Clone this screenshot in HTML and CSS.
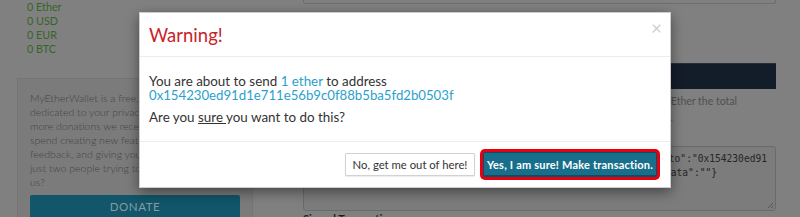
FILE: index.html
```html
<!DOCTYPE html>
<html>
<head>
<meta charset="utf-8">
<link rel="stylesheet" href="styles.css">
</head>
<body>
<div class="page">
  <div class="left">
    <div class="balances">
      <div>0 Ether</div>
      <div>0 USD</div>
      <div>0 EUR</div>
      <div>0 BTC</div>
    </div>
    <div class="donate-box">
      <p class="donate-text">MyEtherWallet is a free, open-source service<br>dedicated to your privacy and security. The<br>more donations we receive, the more time we<br>spend creating new features, listening to your<br>feedback, and giving you what you want. We are<br>just two people trying to change the world. Help<br>us?</p>
      <div class="donate-btn">DONATE</div>
    </div>
  </div>
  <div class="right">
    <div class="input-end"></div>
    <div class="navy-bar"></div>
    <div class="hint"><span>Including the gas fee you will have 1 Ether the total</span></div>
    <div class="hint hint-2"><span>amount sent to the address above.</span></div>
    <div class="raw-tx">
      <div class="tx-line"><span>{"nonce":"0x00","gasPrice":"0x04a817c800","gasLimit":"0x5208","to":"0x154230ed91</span></div>
      <div class="tx-line tx-line-2"><span>d1e711e56b9c0f88b5ba5fd2b0503f","value":"0x0de0b6b3a7640000","data":""}</span></div>
      <svg class="grip" width="7" height="7" viewBox="0 0 7 7"><path d="M6 1L1 6M6 4L4 6" stroke="#555" stroke-width="1"/></svg>
    </div>
    <div class="label">Signed Transaction</div>
  </div>
</div>

<div class="modal">
  <div class="modal-header">
    <h3 class="modal-title">Warning!</h3>
    <span class="close">&times;</span>
  </div>
  <div class="modal-body">
    <p class="msg">You are about to send <span class="hl">1 ether</span> to address<br><span class="hl addr">0x154230ed91d1e711e56b9c0f88b5ba5fd2b0503f</span></p>
    <p class="msg q">Are you <u>sure </u>you want to do this?</p>
  </div>
  <div class="modal-footer">
    <button class="btn btn-default">No, get me out of here!</button>
    <button class="btn btn-primary">Yes, I am sure! Make transaction.</button>
  </div>
</div>
</body>
</html>
```
FILE: styles.css
```css
html, body {
  margin: 0;
  padding: 0;
}
body {
  background: #808080;
  font-family: Lato, "Open Sans", sans-serif;
  font-size: 11px;
  width: 800px;
  height: 217px;
  overflow: hidden;
  position: relative;
}
.page {
  display: flex;
  gap: 50px;
  padding-left: 17px;
}
.left {
  width: 236px;
  flex: none;
}
.balances {
  padding-left: 10px;
  color: #376527;
  line-height: 14px;
  font-size: 10.8px;
}
.donate-box {
  margin-top: 22px;
  background: #7b7b7b;
  border: 1px solid #747474;
  padding: 12px 12px 20px 12px;
}
.donate-text {
  margin: 0;
  color: #444;
  font-size: 10.5px;
  line-height: 14px;
  font-weight: 300;
  white-space: nowrap;
  overflow: hidden;
}
.donate-btn {
  margin-top: 6px;
  background: #11566a;
  color: #8a9aa0;
  text-align: center;
  font-size: 11.5px;
  height: 34px;
  line-height: 23px;
  letter-spacing: 0.6px;
  border-radius: 2px;
}
.right {
  width: 473px;
  flex: none;
}
.input-end {
  height: 3px;
  border: 1px solid #6e6e6e;
  border-top: none;
  border-radius: 0 0 3px 3px;
}
.navy-bar {
  margin-top: 59px;
  height: 25px;
  background: #131d2a;
  border-top: 1px solid #26303b;
}
.hint {
  display: flex;
  justify-content: flex-end;
  overflow: hidden;
  white-space: nowrap;
  color: #505050;
  font-size: 10.5px;
  line-height: 16px;
  font-weight: 400;
  margin-right: 39px;
}
.navy-bar + .hint {
  margin-top: 4px;
}
.hint-2 {
  margin-right: 103px;
}
.hint span, .tx-line span {
  flex: none;
}
.raw-tx {
  position: relative;
  margin-top: 21px;
  height: 58px;
  background: #7c7c7c;
  border: 1px solid #6a6a6a;
  border-radius: 3px;
  padding: 5px 8px 0 8px;
  font-family: "DejaVu Sans Mono", monospace;
  font-size: 9.6px;
  color: #262626;
}
.tx-line {
  display: flex;
  justify-content: flex-end;
  overflow: hidden;
  white-space: nowrap;
  line-height: 14px;
}
.tx-line-2 {
  margin-right: 50px;
}
.grip {
  position: absolute;
  right: 1px;
  bottom: 1px;
}
.label {
  margin-top: 1px;
  font-weight: 700;
  color: #1e1e1e;
  font-size: 11px;
  line-height: 14px;
}

/* modal */
.modal {
  position: absolute;
  left: 139px;
  top: 12px;
  width: 530px;
  background: #fff;
  border: 1px solid rgba(0, 0, 0, 0.2);
  box-shadow: 0 4px 12px rgba(0, 0, 0, 0.45);
}
.modal-header {
  position: relative;
  height: 43px;
  border-bottom: 1px solid #ececec;
  display: flex;
  align-items: center;
  padding: 0 9px;
}
.modal-title {
  margin: 0;
  font-size: 18.5px;
  font-weight: 400;
  color: #c8232b;
  line-height: 22px;
}
.close {
  position: absolute;
  right: 8px;
  top: 4px;
  font-size: 19px;
  color: #cfcfcf;
  line-height: 22px;
}
.modal-body {
  padding: 17px 9px 17px 9px;
  border-bottom: 1px solid #ececec;
}
.msg {
  margin: 0;
  font-size: 13.4px;
  line-height: 14px;
  color: #333;
}
.addr {
  font-size: 13.2px;
}
.q {
  margin-top: 8px;
}
.hl {
  color: #2aa1cc;
}
.modal-footer {
  display: flex;
  justify-content: flex-end;
  align-items: center;
  gap: 8px;
  padding: 9px 10px 10px 10px;
}
.btn {
  font-family: Lato, "Open Sans", sans-serif;
  margin: 0;
  white-space: nowrap;
  cursor: pointer;
}
.btn-default {
  width: 130px;
  height: 23px;
  font-size: 11.3px;
  background: #fff;
  color: #333;
  border: 1px solid #d2d2d2;
  border-radius: 1px;
  box-shadow: 0 1px 1px rgba(0, 0, 0, 0.08);
  padding: 0;
}
.btn-primary {
  width: 174px;
  height: 25px;
  font-size: 11px;
  letter-spacing: 0.2px;
  background: #176f8b;
  color: #fff;
  font-weight: 700;
  border: 1px solid #0d4e66;
  border-bottom-width: 2px;
  border-radius: 2px;
  box-shadow: 0 0 0 3px #e8000e;
  padding: 0;
  margin-top: 1px;
  margin-right: 3px;
}
```
